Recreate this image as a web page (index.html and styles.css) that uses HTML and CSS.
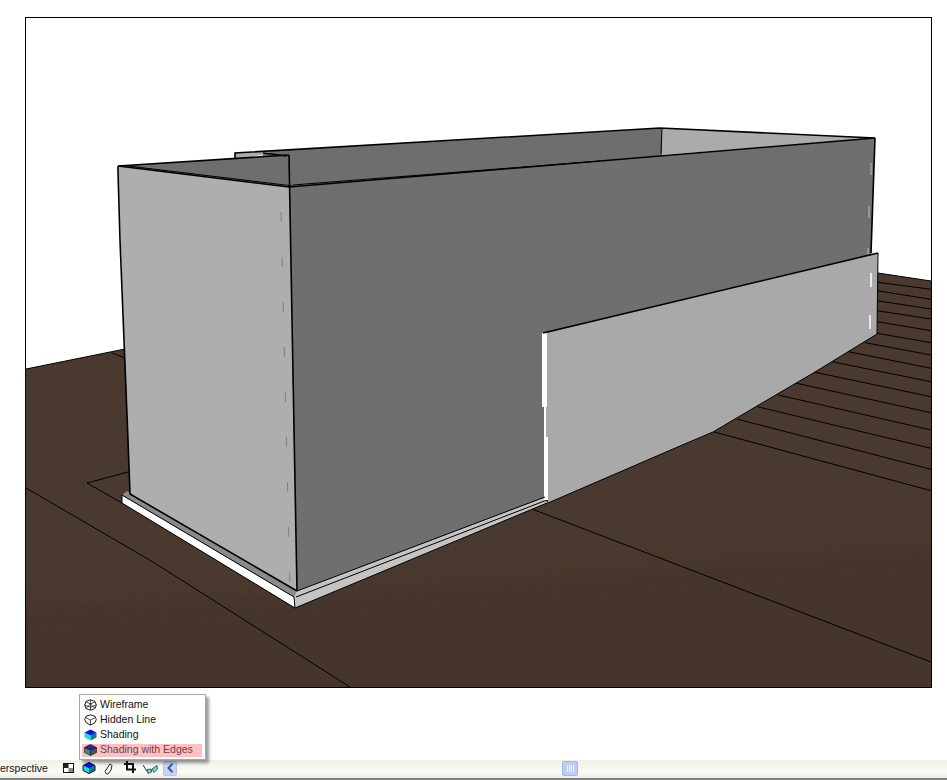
FILE: index.html
```html
<!DOCTYPE html>
<html lang="en">
<head>
<meta charset="utf-8">
<title>Perspective view</title>
<link rel="stylesheet" href="styles.css">
</head>
<body>
<svg class="defs" width="0" height="0" aria-hidden="true">
  <symbol id="i-wire" viewBox="0 0 13 12">
    <path d="M6.500 .8 11 2.300 12.300 6 11 9.500 6.500 11.200 2 9.500 .7 6 2 2.300Z" fill="#fff" stroke="#222" stroke-width="1"/>
    <path d="M2 2.800 6.500 5 11 2.800M6.500 .8V11.200M.7 6 6.500 8.300 12.300 6M2 9.300 6.500 5 11 9.300" fill="none" stroke="#222" stroke-width=".8"/>
  </symbol>
  <symbol id="i-hidden" viewBox="0 0 13 12">
    <path d="M6.500 .8 11 2.300 12.300 5.500 11 8.500 6.500 11.200 2 8.500 .7 5.500 2 2.300Z" fill="#fff" stroke="#222" stroke-width="1"/>
    <path d="M1.500 3.500 6.500 6 11.500 3.500M6.500 6V11" fill="none" stroke="#222" stroke-width=".8"/>
  </symbol>
  <symbol id="i-shade" viewBox="0 0 13 12">
    <path d="M6.500 5.500 12.500 3.800V8.500L6.500 11.500Z" fill="#0a7f8a"/>
    <path d="M6.500 5.500 .5 3.800V8.500L6.500 11.500Z" fill="#27d8e0"/>
    <path d="M6.500 .4 12.500 3.500 6.500 6.300 .5 3.500Z" fill="#0a14e8"/>
  </symbol>
  <symbol id="i-edges" viewBox="0 0 13 12">
    <path d="M6.500 5.500 12.500 3.800V8.500L6.500 11.500Z" fill="#3a5a60" stroke="#222" stroke-width=".7"/>
    <path d="M6.500 5.500 .5 3.800V8.500L6.500 11.500Z" fill="#3f8a90" stroke="#222" stroke-width=".7"/>
    <path d="M6.500 .4 12.500 3.500 6.500 6.300 .5 3.500Z" fill="#3c1a90" stroke="#222" stroke-width=".7"/>
  </symbol>
  <filter id="soft" x="-10%" y="-30%" width="120%" height="160%"><feGaussianBlur stdDeviation="10"/></filter>
</svg>

<div class="page">
  <div class="viewport">
    <svg class="scene" viewBox="26 18 905 669" width="905" height="669" role="img" aria-label="Shaded 3D model of a walled box on a brown floor">
      <!-- floor -->
      <polygon class="floor" points="26,369 125,349 878,273 931,281 931,687 26,687"/>
      <polygon class="floor-dark" filter="url(#soft)" points="0,610 300,595 600,575 733,562 960,546 960,720 0,720"/>

      <g class="ln1">
        <line x1="878" y1="282.300" x2="931" y2="289.300"/>
        <line x1="877" y1="290.700" x2="931" y2="299.300"/>
        <line x1="877" y1="300.700" x2="931" y2="309"/>
        <line x1="877" y1="310.700" x2="931" y2="319"/>
        <line x1="877" y1="321.700" x2="931" y2="330.700"/>
        <line x1="877" y1="333.300" x2="931" y2="342.700"/>
        <line x1="865" y1="342.700" x2="931" y2="355"/>
        <line x1="848.300" y1="351.700" x2="931" y2="368.300"/>
        <line x1="831.700" y1="361.700" x2="931" y2="381.700"/>
        <line x1="815" y1="372.300" x2="931" y2="396.700"/>
        <line x1="796.700" y1="383.300" x2="931" y2="412.700"/>
        <line x1="778.300" y1="395" x2="931" y2="430"/>
        <line x1="757.300" y1="406.700" x2="931" y2="448.300"/>
        <line x1="736.700" y1="419" x2="931" y2="469.300"/>
        <line x1="713.300" y1="431.700" x2="931" y2="490.700"/>
        <polyline points="128,472 87,483 122,503"/>
        <polyline points="26,488 153,562 350,687"/>
        <line x1="532" y1="509" x2="931" y2="662"/>
        <line x1="112" y1="353" x2="125" y2="358"/>
      </g>
      <polyline class="ln1" points="26,369 125,349"/>
      <polyline class="ln1" points="878,273 931,281"/>

      <!-- interior faces seen over the rim -->
      <polygon class="lit" points="235,153 272,151 262,155 240,158.500 235,158.500"/>
      <polygon class="shade" points="262,155 272,151 662,128 662,156 289,187"/>
      <polygon class="lit" points="662,128 875,138 662,155"/>
      <polygon class="shade" points="118,166 289,155 289,187"/>
      <polyline class="ln2" points="235,158 235,153 660,128 875,138"/>
      <line class="ln1" x1="662" y1="128" x2="661" y2="154"/>
      <polyline class="ln2" points="118,166 289,155"/>
      <line class="ln2" x1="263" y1="153" x2="287" y2="156"/>

      <!-- plinth -->
      <polygon class="plinth-white" points="122,495 294,597 295,608 122,503"/>
      <polygon class="plinth-grey" points="122,495 127,491 297,590 294,597"/>
      <polygon class="plinth-light" points="294,597 297,590 545,497 547,503 295,608"/>
      <g class="ln1">
        <polyline points="122,495 294,597 295,608 122,503 122,495"/>
        <line x1="296" y1="597" x2="547" y2="500"/>
        <line x1="295" y1="608" x2="547" y2="503"/>
      </g>

      <!-- outer walls -->
      <polygon class="wall-left" points="118,166 289,187 297,591 130,494"/>
      <polygon class="wall-right" points="289,187 875,138 871,262 545,336 545,497 297,591"/>
      <polygon class="gap" points="542,333 547,333 547,407 546,407 546,437 548,437 548,500 544,500 544,407 542,407"/>
      <polygon class="panel" points="547,333 878,253 877,334 815,372 757,406 713,432 680,446 548,503 548,437 546,437 546,407 547,407"/>

      <!-- seams -->
      <line class="dash-grey" x1="281" y1="212" x2="290" y2="590"/>
      <g class="dash-pale">
        <line x1="871" y1="163" x2="871" y2="175"/>
        <line x1="869" y1="206" x2="869" y2="218"/>
        <line x1="868" y1="248" x2="868" y2="255"/>
      </g>
      <g class="dash-white">
        <line x1="871" y1="273" x2="871" y2="287"/>
        <line x1="870" y1="315" x2="870" y2="329"/>
      </g>

      <!-- wall outlines -->
      <g class="ln2">
        <polyline points="118,166 118,172 120,240 128,440 130,494 297,591"/>
        <polyline points="118,166 289,187 875,138"/>
        <line x1="289" y1="155" x2="297" y2="591"/>
        <polyline points="875,138 871,253"/>
        <polyline points="543,333 878,253"/>
      </g>
      <g class="ln1">
        <polyline points="128,166 293,186"/>
        <polyline points="293,185 600,161"/>
        <polyline points="878,253 877,334 815,372 757,406 713,432 680,446 548,503"/>
        <polyline points="297,591 545,497"/>
      </g>
    </svg>
  </div>

  <footer class="status">
    <span class="status-label">erspective</span>
    <svg class="tool tool-check" viewBox="0 0 11 10" width="11" height="10"><rect x=".5" y=".5" width="10" height="9" fill="#fff" stroke="#111"/><rect x="1" y="1" width="4.500" height="4" fill="#222"/><rect x="5.500" y="5" width="4.500" height="4" fill="#888"/></svg>
    <span class="tool-active"><svg viewBox="0 0 13 12" width="14" height="12"><use href="#i-shade"/><path d="M6.500 .4 12.500 3.500V8.500L6.500 11.500 .5 8.500V3.500Z" fill="none" stroke="#111"/></svg></span>
    <svg class="tool tool-leaf" viewBox="0 0 9 12" width="9" height="12"><path d="M2.500 11 1 8.500 6 1 8 2.500 7 7 4 11Z" fill="#fff" stroke="#222"/></svg>
    <svg class="tool tool-crop" viewBox="0 0 12 12" width="12" height="12"><path d="M3 0V8.500H12M0 3H9V12" fill="none" stroke="#111" stroke-width="2"/></svg>
    <svg class="tool tool-glasses" viewBox="0 0 15 10" width="15" height="10"><path d="M0 1 4 7.500M5 6 9 6.500" fill="none" stroke="#333"/><path d="M4 5.500 8 5 8.500 8 5 9.500Z" fill="#5fe0d0" stroke="#333" stroke-width=".8"/><path d="M9 5 14 1.500 14.500 5 11 8.500Z" fill="#5fe0d0" stroke="#333" stroke-width=".8"/></svg>
    <span class="tool-collapse"><svg viewBox="0 0 7 10" width="7" height="10"><path d="M5.500 .8 1.500 5 5.500 9.200" fill="none" stroke="#3a5a9a" stroke-width="2"/></svg></span>
    <span class="scroll-thumb"><svg viewBox="0 0 7 7" width="7" height="7"><path d="M.5 0V7M2.500 0V7M4.500 0V7M6.500 0V7" stroke="#f2f5ff"/></svg></span>
  </footer>

  <ul class="menu">
    <li class="menu-item"><svg class="menu-icon" width="13" height="12"><use href="#i-wire"/></svg>Wireframe</li>
    <li class="menu-item"><svg class="menu-icon" width="13" height="12"><use href="#i-hidden"/></svg>Hidden Line</li>
    <li class="menu-item"><svg class="menu-icon" width="13" height="12"><use href="#i-shade"/></svg>Shading</li>
    <li class="menu-item menu-item-hot"><svg class="menu-icon" width="13" height="12"><use href="#i-edges"/></svg>Shading with Edges</li>
  </ul>
</div>
</body>
</html>
```

FILE: styles.css
```css
* { box-sizing: border-box; }

html, body {
  margin: 0;
  padding: 0;
  background: #fff;
}

.defs { position: absolute; }

.page {
  position: relative;
  display: flex;
  flex-direction: column;
  justify-content: space-between;
  width: 947px;
  height: 780px;
  padding-top: 17px;
  overflow: hidden;
  font-family: "Liberation Sans", Arial, sans-serif;
  font-size: 10.500px;
  color: #111;
}

.viewport {
  width: 907px;
  height: 671px;
  margin-left: 25px;
  border: 1px solid #000;
  background: #fff;
}

.scene { display: block; }

.floor { fill: #4a392e; }
.floor-dark { fill: #45352b; }
.lit { fill: #ababab; }
.shade { fill: #6e6e6e; }
.wall-left { fill: #aeaeae; }
.wall-right { fill: #6f6f6f; }
.panel { fill: #a9a9a9; }
.gap { fill: #fff; }
.plinth-white { fill: #fff; }
.plinth-grey { fill: #8a8a8a; }
.plinth-light { fill: #c4c4c4; }

.ln1, .ln1 line, .ln1 polyline {
  fill: none;
  stroke: #000;
  stroke-width: 1;
}

.ln2, .ln2 line, .ln2 polyline {
  fill: none;
  stroke: #000;
  stroke-width: 1.6;
}

.dash-grey {
  stroke: #808080;
  stroke-width: 1;
  stroke-dasharray: 10 35;
}

.dash-pale line { stroke: #bdbdbd; stroke-width: 1; }
.dash-white line { stroke: #fff; stroke-width: 1.5; }

.status {
  display: flex;
  align-items: center;
  width: 100%;
  height: 20px;
  padding-bottom: 2px;
  border-bottom: 2px solid #808080;
  background: linear-gradient(#f1f0e7, #fbfbf8 70%, #efede1);
  overflow: hidden;
}

.status-label {
  flex: none;
  width: 47px;
  margin-right: 16px;
  white-space: nowrap;
}

.tool { flex: none; display: block; }

.tool-active {
  flex: none;
  display: flex;
  align-items: center;
  justify-content: center;
  width: 18px;
  height: 17px;
  margin-left: 6px;
  background: #fbfaf4;
}

.tool-leaf { margin-left: 6px; margin-top: 2px; }
.tool-crop { margin-left: 11px; margin-top: -3px; }
.tool-glasses { margin-left: 7px; margin-top: 1px; }

.tool-collapse {
  flex: none;
  display: flex;
  align-items: center;
  justify-content: center;
  width: 14px;
  height: 15px;
  margin-left: 5px;
  border: 1px solid #b4c6ec;
  border-radius: 2px;
  background: #c6d5f6;
}

.scroll-thumb {
  flex: none;
  display: flex;
  align-items: center;
  justify-content: center;
  width: 16px;
  height: 15px;
  margin-left: 385px;
  border: 1px solid #9fb4e8;
  border-radius: 2px;
  background: #bccdf6;
}

.menu {
  position: absolute;
  left: 79px;
  top: 694px;
  width: 127px;
  height: 66px;
  margin: 0;
  padding: 2px 3px 0 2px;
  list-style: none;
  background: #fff;
  border: 1px solid #a8a8a0;
  box-shadow: 3px 3px 3px rgba(0, 0, 0, .4);
}

.menu-item {
  display: flex;
  align-items: center;
  height: 15px;
  padding-left: 2px;
  white-space: nowrap;
  line-height: 13px;
}

.menu-item-hot {
  height: 13px;
  margin-top: 2px;
  padding-bottom: 2px;
  background: #ffc0c4;
  color: #6e3f46;
}

.menu-icon {
  flex: none;
  margin-right: 3px;
}
```
